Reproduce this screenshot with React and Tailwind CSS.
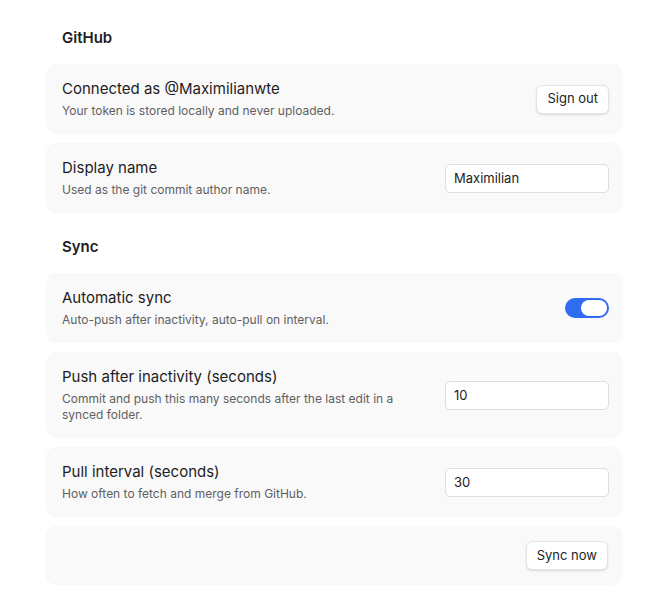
const font = { fontFamily: 'Inter, "Noto Sans", "Liberation Sans", sans-serif' };

function Row({ title, desc, children }) {
  return (
    <div className="flex items-center justify-between gap-4 rounded-[10px] bg-[#f9f9f9] pl-4 pr-[14px] py-[15px]">
      <div className="flex max-w-[345px] flex-col gap-1">
        <div className="text-[15px] leading-5 text-[#1d1d1f]">{title}</div>
        <div className="text-[12px] leading-4 text-[#5f5f63]">{desc}</div>
      </div>
      {children}
    </div>
  );
}

function Button({ children }) {
  return (
    <button className="h-[29px] rounded-[6px] border border-[#e3e3e3] bg-white px-[10px] text-[13px] text-[#1d1d1f] shadow-[0_1px_2px_rgba(0,0,0,0.12)]">
      {children}
    </button>
  );
}

function Field({ value }) {
  return (
    <input
      defaultValue={value}
      className="h-[29px] w-[164px] shrink-0 rounded-[5px] border border-[#dedede] bg-white px-2 text-[13px] text-[#1d1d1f] outline-none"
      style={font}
    />
  );
}

function Toggle() {
  return (
    <div className="flex h-5 w-11 shrink-0 items-center justify-end rounded-full bg-[#2f6cf0] p-[2px]">
      <div className="h-4 w-[26px] rounded-full bg-white" />
    </div>
  );
}

export default function App() {
  return (
    <div className="min-h-screen bg-white" style={font}>
      <div className="ml-[46px] w-[577px] pt-7 pb-6">
        <h2 className="mb-4 pl-4 text-[15px] font-semibold leading-5 text-[#1d1d1f]">GitHub</h2>
        <div className="flex flex-col gap-[9px]">
          <Row title="Connected as @Maximilianwte" desc="Your token is stored locally and never uploaded.">
            <Button>Sign out</Button>
          </Row>
          <Row title="Display name" desc="Used as the git commit author name.">
            <Field value="Maximilian" />
          </Row>
        </div>

        <h2 className="mt-6 mb-4 pl-4 text-[15px] font-semibold leading-5 text-[#1d1d1f]">Sync</h2>
        <div className="flex flex-col gap-[9px]">
          <Row title="Automatic sync" desc="Auto-push after inactivity, auto-pull on interval.">
            <Toggle />
          </Row>
          <Row title="Push after inactivity (seconds)" desc="Commit and push this many seconds after the last edit in a synced folder.">
            <Field value="10" />
          </Row>
          <Row title="Pull interval (seconds)" desc="How often to fetch and merge from GitHub.">
            <Field value="30" />
          </Row>
          <div className="flex justify-end rounded-[10px] bg-[#f9f9f9] px-[15px] py-[15px]">
            <Button>Sync now</Button>
          </div>
        </div>
      </div>
    </div>
  );
}
